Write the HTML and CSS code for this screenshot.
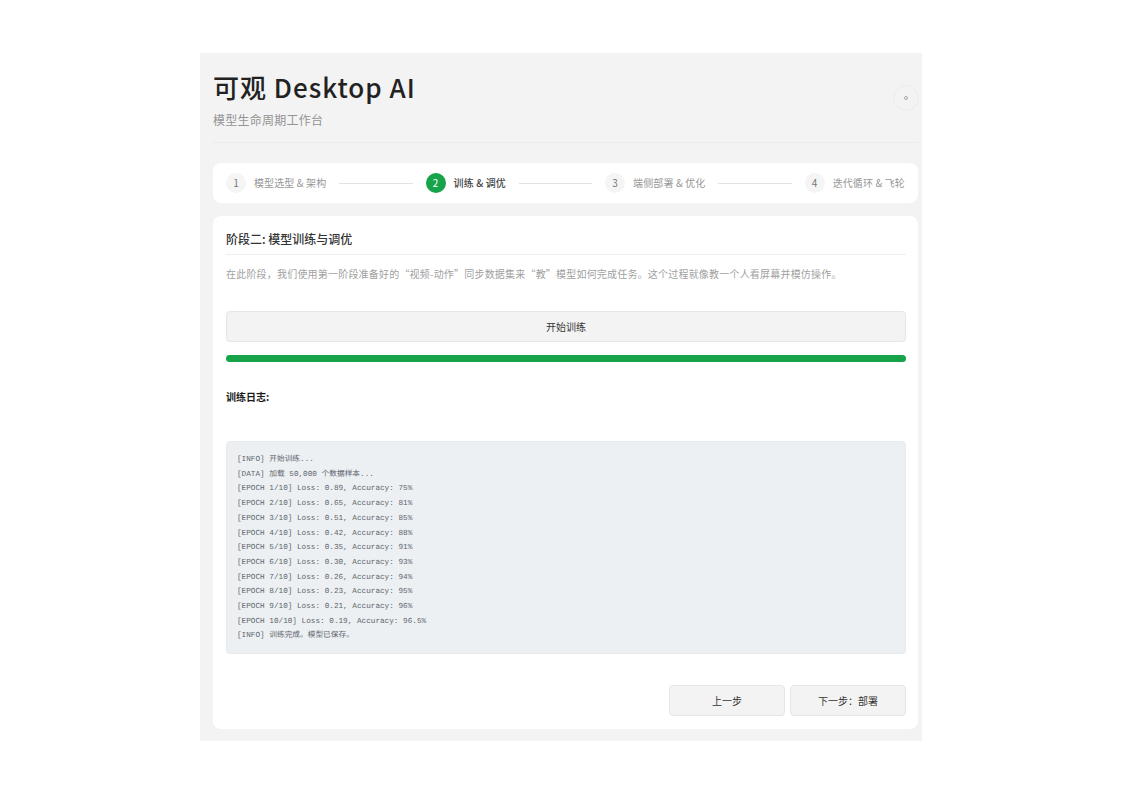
FILE: index.html
```html
<!DOCTYPE html>
<html lang="zh-CN">
<head>
<meta charset="utf-8">
<title>可观 Desktop AI</title>
<link rel="stylesheet" href="styles.css">
</head>
<body>
<div class="app">
  <header class="header">
    <div class="brand">
      <h1 class="title">可观 Desktop AI</h1>
      <p class="subtitle">模型生命周期工作台</p>
    </div>
    <button class="theme-btn" aria-label="主题"><span class="theme-glyph"></span></button>
  </header>
  <nav class="stepper">
    <div class="step"><span class="step-num">1</span><span class="step-label">模型选型 &amp; 架构</span></div>
    <span class="step-line"></span>
    <div class="step active"><span class="step-num">2</span><span class="step-label">训练 &amp; 调优</span></div>
    <span class="step-line"></span>
    <div class="step"><span class="step-num">3</span><span class="step-label">端侧部署 &amp; 优化</span></div>
    <span class="step-line"></span>
    <div class="step"><span class="step-num">4</span><span class="step-label">迭代循环 &amp; 飞轮</span></div>
  </nav>
  <main class="card">
    <h2 class="card-title">阶段二: 模型训练与调优</h2>
    <p class="intro">在此阶段，我们使用第一阶段准备好的“视频-动作”同步数据集来“教”模型如何完成任务。这个过程就像教一个人看屏幕并模仿操作。</p>
    <button class="btn btn-wide">开始训练</button>
    <div class="progress"><div class="progress-fill"></div></div>
    <h3 class="log-title">训练日志:</h3>
    <pre class="log">[INFO] 开始训练...
[DATA] 加载 50,000 个数据样本...
[EPOCH 1/10] Loss: 0.89, Accuracy: 75%
[EPOCH 2/10] Loss: 0.65, Accuracy: 81%
[EPOCH 3/10] Loss: 0.51, Accuracy: 85%
[EPOCH 4/10] Loss: 0.42, Accuracy: 88%
[EPOCH 5/10] Loss: 0.35, Accuracy: 91%
[EPOCH 6/10] Loss: 0.30, Accuracy: 93%
[EPOCH 7/10] Loss: 0.26, Accuracy: 94%
[EPOCH 8/10] Loss: 0.23, Accuracy: 95%
[EPOCH 9/10] Loss: 0.21, Accuracy: 96%
[EPOCH 10/10] Loss: 0.19, Accuracy: 96.5%
[INFO] 训练完成。模型已保存。</pre>
    <div class="actions">
      <button class="btn btn-nav">上一步</button>
      <button class="btn btn-nav">下一步：部署</button>
    </div>
  </main>
</div>
</body>
</html>
```
FILE: styles.css
```css
* { box-sizing: border-box; }
html, body { margin: 0; padding: 0; background: #fff; }
body {
  padding-top: 53px;
  height: 794px;
  overflow: hidden;
  font-family: "Noto Sans CJK SC", "Noto Sans", sans-serif;
  color: #1f1f1f;
}
.app {
  width: 722px;
  height: 688px;
  margin-left: 200px;
  padding: 0 4px 12px 13px;
  background: #f3f3f3;
  display: flex;
  flex-direction: column;
}
.header {
  height: 90px;
  display: flex;
  justify-content: space-between;
  align-items: center;
  border-bottom: 1px solid #ececec;
  margin-bottom: 20px;
}
.brand { padding-top: 2px; }
.title {
  margin: 0;
  font-size: 26px;
  line-height: 38px;
  font-weight: 500;
  letter-spacing: 1px;
  color: #222;
}
.subtitle {
  margin: 5px 0 0;
  font-size: 12px;
  line-height: 18px;
  letter-spacing: 0.25px;
  color: #949494;
}
.theme-btn {
  width: 26px;
  height: 26px;
  padding: 0;
  margin-right: -1px;
  border: 1px solid #ebebeb;
  border-radius: 50%;
  background: #f3f3f3;
  display: flex;
  align-items: center;
  justify-content: center;
}
.theme-glyph {
  width: 4px;
  height: 4px;
  border: 1px solid #a8a8a8;
  border-radius: 50%;
}
.stepper {
  height: 40px;
  flex: none;
  padding: 0 13px;
  background: #fff;
  border-radius: 8px;
  display: flex;
  align-items: center;
  gap: 13px;
}
.step { display: flex; align-items: center; gap: 8px; flex: none; }
.step-num {
  width: 20px;
  height: 20px;
  padding-bottom: 1px;
  border-radius: 50%;
  background: #f5f5f5;
  color: #757575;
  font-size: 10px;
  display: flex;
  align-items: center;
  justify-content: center;
}
.step-label {
  font-size: 10px;
  line-height: 14px;
  padding-bottom: 1px;
  letter-spacing: 0.12px;
  color: #979797;
  white-space: nowrap;
}
.step.active .step-num { background: #17a34a; color: #fff; }
.step.active .step-label { color: #444; font-weight: 500; }
.step-line { flex: 1; height: 1px; background: #e2e2e2; }
.card {
  flex: 1;
  margin-top: 13px;
  padding: 1px 12px 0 13px;
  background: #fff;
  border-radius: 8px;
  display: flex;
  flex-direction: column;
}
.card-title {
  margin: 0;
  height: 38px;
  padding-top: 12px;
  font-size: 12px;
  line-height: 20px;
  font-weight: 500;
  color: #333;
  border-bottom: 1px solid #eeeeee;
}
.intro {
  margin: 10px 0 0;
  font-size: 10px;
  line-height: 18px;
  letter-spacing: 0.2px;
  color: #9f9f9f;
  white-space: nowrap;
}
.btn {
  font-family: inherit;
  background: #f3f3f3;
  border: 1px solid #e6e6e6;
  border-radius: 4px;
  color: #333;
  padding: 0;
}
.btn-wide {
  height: 31px;
  margin-top: 28px;
  font-size: 10px;
  flex: none;
}
.progress {
  height: 7px;
  margin-top: 13px;
  border-radius: 4px;
  background: #e8e8e8;
  overflow: hidden;
  flex: none;
}
.progress-fill { height: 100%; width: 100%; background: #17a34a; }
.log-title {
  margin: 27px 0 0;
  font-size: 10px;
  line-height: 16px;
  font-weight: 700;
  color: #1a1a1a;
}
.log {
  margin: 36px 0 0;
  height: 213px;
  padding: 11px 10px 9px;
  background: #ecf0f3;
  border: 1px solid #e8ebee;
  border-radius: 4px;
  font-family: "Liberation Mono", "Noto Sans CJK SC", monospace;
  font-size: 7.7px;
  line-height: 14.7px;
  text-rendering: geometricPrecision;
  color: #5f666d;
  flex: none;
}
.actions {
  display: flex;
  justify-content: flex-end;
  gap: 5px;
  margin-top: 31px;
}
.btn-nav {
  width: 116px;
  height: 31px;
  font-size: 10px;
}
```
